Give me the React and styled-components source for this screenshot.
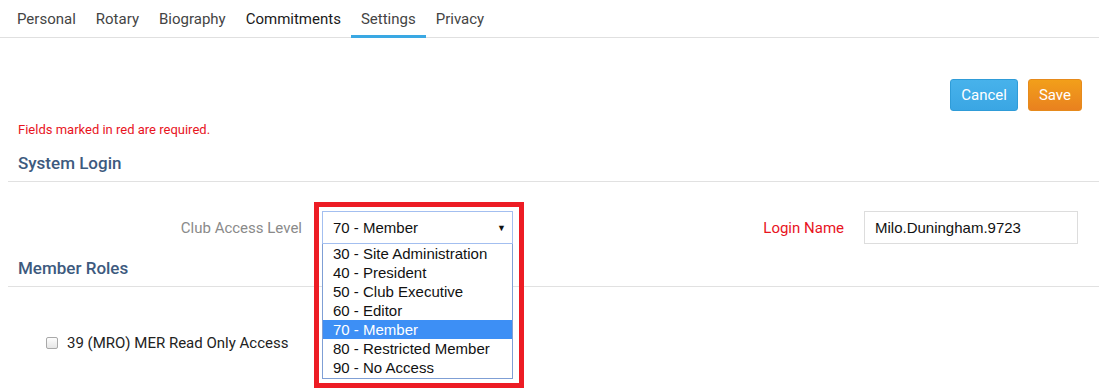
import React from "react";
import styled, { createGlobalStyle } from "styled-components";

const Global = createGlobalStyle`
  body {
    margin: 0;
    background: #fff;
    font-family: Roboto, "Liberation Sans", sans-serif;
  }
`;

const tabs = ["Personal", "Rotary", "Biography", "Commitments", "Settings", "Privacy"];
const levels = [
  "30 - Site Administration",
  "40 - President",
  "50 - Club Executive",
  "60 - Editor",
  "70 - Member",
  "80 - Restricted Member",
  "90 - No Access",
];

const App = () => {
  return (
    <>
      <Global />
      <Page>
        <TabBar>
          {tabs.map((t) => (
            <Tab key={t} active={t === "Settings"} strong={t === "Commitments"}>
              {t}
            </Tab>
          ))}
        </TabBar>

        <Actions>
          <Button kind="cancel">Cancel</Button>
          <Button kind="save">Save</Button>
        </Actions>

        <Required>Fields marked in red are required.</Required>

        <SectionTitle top="2px">System Login</SectionTitle>

        <FormRow>
          <Label width="314px">Club Access Level</Label>
          <SelectCell>
            <Select>
              <span>70 - Member</span>
              <Arrow>▼</Arrow>
            </Select>
            <OptionList>
              {levels.map((l) => (
                <Option key={l} selected={l === "70 - Member"}>
                  {l}
                </Option>
              ))}
            </OptionList>
            <Highlight />
          </SelectCell>
          <Label width="351px" required>
            Login Name
          </Label>
          <TextInput>Milo.Duningham.9723</TextInput>
        </FormRow>

        <SectionTitle>Member Roles</SectionTitle>

        <CheckRow>
          <Box />
          <span>39 (MRO) MER Read Only Access</span>
        </CheckRow>
      </Page>
    </>
  );
};

export default App;

const Page = styled.div`
  width: 1099px;
  height: 388px;
  overflow: hidden;
`;

const TabBar = styled.div`
  display: flex;
  padding-left: 7px;
  height: 37px;
  border-bottom: 1px solid #e0e0e0;
`;

const Tab = styled.div`
  display: flex;
  align-items: center;
  box-sizing: border-box;
  height: 38px;
  margin-bottom: -1px;
  padding: 2px 10px 0;
  font-size: 15px;
  color: ${(p) => (p.strong ? "#1a1a1a" : "#444")};
  border-bottom: 3px solid ${(p) => (p.active ? "#3aa8e3" : "transparent")};
`;

const Actions = styled.div`
  display: flex;
  justify-content: flex-end;
  gap: 10px;
  padding: 41px 17px 0 0;
`;

const Button = styled.div`
  height: 32px;
  box-sizing: border-box;
  padding: 0 10px;
  display: flex;
  align-items: center;
  border-radius: 3px;
  color: #fff;
  font-size: 15px;
  background: ${(p) =>
    p.kind === "save"
      ? "linear-gradient(#f29f1a, #e9811f)"
      : "linear-gradient(#47b2eb, #3aa6e4)"};
  border: 1px solid ${(p) => (p.kind === "save" ? "#e68a1c" : "#2f9cd8")};
`;

const Required = styled.div`
  margin: 12px 0 0 18px;
  font-size: 13px;
  color: #e8141e;
  line-height: 14px;
`;

const SectionTitle = styled.div`
  margin: ${(p) => p.top || "0"} 0 0 8px;
  padding: 15px 10px 9px;
  font-size: 17px;
  font-weight: 500;
  color: #3d5a7e;
  border-bottom: 1px solid #e1e1e1;
  line-height: 18px;
`;

const FormRow = styled.div`
  display: flex;
  align-items: center;
  margin: 29px 0 0 8px;
  height: 33px;
`;

const Label = styled.div`
  width: ${(p) => p.width};
  box-sizing: border-box;
  padding-right: 20px;
  text-align: right;
  font-size: 15px;
  color: ${(p) => (p.required ? "#e8141e" : "#8a8a8a")};
`;

const SelectCell = styled.div`
  position: relative;
  width: 191px;
  height: 33px;
`;

const Select = styled.div`
  height: 33px;
  box-sizing: border-box;
  border: 1px solid #a3bff0;
  display: flex;
  align-items: center;
  justify-content: space-between;
  padding: 0 6px 0 10px;
  font-family: "Liberation Sans", Arial, sans-serif;
  font-size: 15px;
  color: #111;
`;

const Arrow = styled.span`
  font-size: 9px;
  color: #111;
`;

const OptionList = styled.div`
  position: absolute;
  top: 33px;
  left: 0;
  width: 191px;
  box-sizing: border-box;
  border: 1px solid #7f9fd5;
  border-top: none;
  background: #fff;
  padding-bottom: 1px;
  z-index: 2;
`;

const Option = styled.div`
  height: 19px;
  line-height: 19px;
  padding-left: 10px;
  font-family: "Liberation Sans", Arial, sans-serif;
  font-size: 15px;
  color: ${(p) => (p.selected ? "#fff" : "#111")};
  background: ${(p) => (p.selected ? "#3d8ff5" : "transparent")};
`;

const Highlight = styled.div`
  position: absolute;
  top: -9px;
  left: -8px;
  width: 210px;
  height: 186px;
  box-sizing: border-box;
  border: 5px solid #ed1c24;
  z-index: 3;
  pointer-events: none;
`;

const TextInput = styled.div`
  width: 214px;
  height: 33px;
  box-sizing: border-box;
  border: 1px solid #dddddd;
  display: flex;
  align-items: center;
  padding-left: 10px;
  font-family: "Liberation Sans", Arial, sans-serif;
  font-size: 15px;
  color: #111;
`;

const CheckRow = styled.div`
  display: flex;
  align-items: center;
  gap: 9px;
  margin: 47px 0 0 46px;
  font-size: 15px;
  color: #222;
`;

const Box = styled.div`
  width: 10px;
  height: 10px;
  border: 1px solid #a9a9a9;
  border-radius: 2px;
  background: linear-gradient(#fdfdfd, #e6e6e6);
`;
